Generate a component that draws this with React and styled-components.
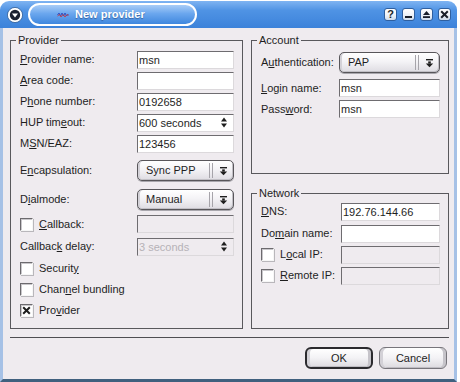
import React from 'react';
import styled, { createGlobalStyle } from 'styled-components';

const GlobalStyle = createGlobalStyle`
  html, body { margin: 0; padding: 0; background: #ffffff; }
  body {
    font-family: "Liberation Sans", Arial, Helvetica, sans-serif;
    font-size: 11px;
    line-height: 13px;
    color: #1e1e1e;
  }
  * { box-sizing: border-box; }
`;

const Window = styled.div`
  width: 457px;
  height: 382px;
  padding-top: 1px;
  display: flex;
  flex-direction: column;
`;

const TitleBar = styled.div`
  height: 27px;
  flex: none;
  display: flex;
  align-items: center;
  padding: 0 6px 0 7px;
  border-radius: 9px 9px 0 0;
  background: linear-gradient(180deg, #7fb4f2 0%, #4f93e4 35%, #3c82da 100%);
`;

const MenuButton = styled.div`
  width: 16px;
  height: 16px;
  flex: none;
  display: flex;
`;

const TitlePill = styled.div`
  margin-left: 5px;
  width: 169px;
  height: 23px;
  border: 2px solid #ffffff;
  border-radius: 12px;
  background: linear-gradient(180deg, #a8ccf7 0%, #6ba7ee 45%, #3f87de 100%);
  display: flex;
  align-items: center;
  padding-left: 27px;
  gap: 6px;
`;

const TitleText = styled.span`
  color: #ffffff;
  font-weight: bold;
  font-size: 11px;
  text-shadow: 0 1px 1px rgba(10, 30, 80, 0.45);
`;

const TitleButtons = styled.div`
  margin-left: auto;
  display: flex;
  gap: 5px;
`;

const TitleButton = styled.div`
  width: 13px;
  height: 13px;
  border-radius: 3px;
  border: 1px solid #2f5f9f;
  background: linear-gradient(180deg, #ffffff 0%, #eef2f8 55%, #cfdcec 100%);
  display: flex;
  align-items: center;
  justify-content: center;
  color: #1a1f2a;
  font-weight: bold;
  font-size: 11px;
  line-height: 11px;
`;

const Frame = styled.div`
  flex: 1;
  display: flex;
  flex-direction: column;
  background: #efebef;
  border-left: 3px solid #a6c1e6;
  border-right: 3px solid #a6c1e6;
  border-bottom: 3px solid #40607e;
  padding: 6px 5px 10px 7px;
`;

const Columns = styled.div`
  display: grid;
  grid-template-columns: 233px 198px;
  column-gap: 8px;
  height: 295px;
`;

const RightColumn = styled.div`
  display: flex;
  flex-direction: column;
  gap: 13px;
`;

const Group = styled.fieldset`
  margin: 0;
  padding: 0;
  min-width: 0;
  border: 1px solid #59585c;
  ${(p) => (p.$height ? `height: ${p.$height}px; flex: none;` : 'flex: 1;')}
`;

const Legend = styled.legend`
  margin-left: 5px;
  padding: 0 2px;
  line-height: 13px;
  font-size: 11px;
`;

const GroupBody = styled.div`
  --label: ${(p) => p.$label}px;
  display: flex;
  flex-direction: column;
  padding: ${(p) => p.$pt}px 8px 0 9px;
`;

const Row = styled.div`
  display: grid;
  grid-template-columns: var(--label) minmax(0, 1fr);
  align-items: center;
  height: ${(p) => p.$h}px;
`;

const Label = styled.span`
  white-space: nowrap;
`;

const Key = styled.u`
  text-underline-offset: 1px;
`;

const CheckRow = styled.div`
  display: flex;
  align-items: center;
  gap: 6px;
  height: ${(p) => p.$h}px;
  white-space: nowrap;
`;

const CheckBox = styled.span`
  width: 13px;
  height: 13px;
  flex: none;
  display: flex;
  align-items: center;
  justify-content: center;
  background: #ffffff;
  border-top: 1px solid #6c6a6e;
  border-left: 1px solid #6c6a6e;
  border-right: 1px solid #f6f6f6;
  border-bottom: 1px solid #f6f6f6;
  box-shadow: inset 1px 1px 0 #c9c7cb, 1px 1px 0 #b9b7bb;
`;

const Field = styled.input`
  width: 100%;
  height: 18px;
  margin: 0;
  padding: 0 2px 0 1px;
  font: inherit;
  color: #1e1e1e;
  outline: none;
  background: ${(p) => (p.$disabled ? '#efebef' : '#ffffff')};
  border-top: 1px solid #6e6c70;
  border-left: 1px solid #6e6c70;
  border-right: 1px solid #dcd9dc;
  border-bottom: 1px solid #dcd9dc;
`;

const SpinBox = styled.div`
  width: 100%;
  height: 18px;
  display: flex;
  align-items: center;
  padding-right: 6px;
  background: ${(p) => (p.$disabled ? '#efebef' : '#ffffff')};
  border-top: 1px solid #6e6c70;
  border-left: 1px solid #6e6c70;
  border-right: 1px solid #dcd9dc;
  border-bottom: 1px solid #dcd9dc;
`;

const SpinText = styled.input`
  flex: 1;
  min-width: 0;
  height: 100%;
  margin: 0;
  padding: 0 2px 0 1px;
  border: none;
  outline: none;
  background: transparent;
  font: inherit;
  color: ${(p) => (p.$disabled ? '#b6b2b7' : '#1e1e1e')};
`;

const Combo = styled.div`
  width: 100%;
  height: 21px;
  display: flex;
  align-items: center;
  border: 1px solid #58565a;
  border-radius: 5px;
  background: linear-gradient(180deg, #ffffff 0%, #f4f3f6 45%, #dedce2 100%);
  box-shadow: inset 2px 0 0 #d4d2d8, inset -1px -1px 0 #c2c0c6, 0 1px 0 #a9a7ad;
`;

const ComboText = styled.span`
  flex: 1;
  padding-left: 8px;
  white-space: nowrap;
`;

const ComboSep = styled.span`
  width: 4px;
  height: 15px;
  border-left: 1px solid #a6a4aa;
  border-right: 1px solid #a6a4aa;
  flex: none;
`;

const ComboArrow = styled.span`
  width: 20px;
  flex: none;
  display: flex;
  justify-content: center;
`;

const Separator = styled.div`
  height: 1px;
  background: #4f4e52;
  margin: 8px 0 9px;
`;

const ButtonRow = styled.div`
  display: flex;
  justify-content: flex-end;
  gap: 6px;
  padding-right: 2px;
`;

const PushButton = styled.button`
  width: 68px;
  height: 22px;
  margin: 0;
  padding: 0;
  font: inherit;
  color: #1e1e1e;
  border-radius: 6px;
  border: ${(p) => (p.$default ? '2px solid #2b2a2e' : '1px solid #77757b')};
  background: linear-gradient(180deg, #ffffff 0%, #f3f2f5 50%, #dcdadf 100%);
  box-shadow: inset 3px 0 0 #d3d1d7, inset -3px 0 0 #c6c4ca, inset 0 -1px 0 #bebcc2;
`;

const MenuIcon = () => (
  <svg width="16" height="16" viewBox="0 0 16 16">
    <circle cx="8" cy="8" r="7.6" fill="#ffffff" stroke="#2d5a96" strokeWidth="0.8" />
    <circle cx="8" cy="8" r="5.2" fill="#1a2030" />
    <path d="M5 6.6 L11 6.6 L8 10.4 Z" fill="#ffffff" />
  </svg>
);

const LogoIcon = () => (
  <svg width="12" height="7" viewBox="0 0 12 7">
    <path d="M0.5 4 L2 2 L3.5 5 L5 2 L6.5 5 L8 2 L9.5 5 L11.5 3" fill="none" stroke="#3050c0" strokeWidth="1" />
    <path d="M0.5 5 L2.5 3.5 L4 6 L6 3.5 L8 6 L10 3.5 L11.5 4.5" fill="none" stroke="#d03030" strokeWidth="0.8" />
  </svg>
);

const MinIcon = () => (
  <svg width="9" height="9" viewBox="0 0 9 9">
    <rect x="1" y="6" width="7" height="2" fill="#1a1f2a" />
  </svg>
);

const MaxIcon = () => (
  <svg width="9" height="9" viewBox="0 0 9 9">
    <path d="M1 5 L8 5 L4.5 1 Z" fill="#1a1f2a" />
    <rect x="1" y="6.2" width="7" height="1.8" fill="#1a1f2a" />
  </svg>
);

const CloseIcon = () => (
  <svg width="9" height="9" viewBox="0 0 9 9">
    <path d="M1.2 1.2 L7.8 7.8 M7.8 1.2 L1.2 7.8" stroke="#1a1f2a" strokeWidth="2" />
  </svg>
);

const DropArrow = () => (
  <svg width="9" height="10" viewBox="0 0 9 10">
    <rect x="1" y="1" width="7" height="1.4" fill="#1e1e1e" />
    <rect x="3.2" y="3.4" width="2.6" height="2.2" fill="#1e1e1e" />
    <path d="M0.8 5.4 L8.2 5.4 L4.5 9.2 Z" fill="#1e1e1e" />
  </svg>
);

const SpinArrows = () => (
  <svg width="6" height="11" viewBox="0 0 6 11">
    <path d="M0 4.5 L6 4.5 L3 0.5 Z" fill="#1e1e1e" />
    <path d="M0 6.5 L6 6.5 L3 10.5 Z" fill="#1e1e1e" />
  </svg>
);

const CheckMark = () => (
  <svg width="9" height="9" viewBox="0 0 9 9">
    <path d="M1.2 1.2 L7.8 7.8 M7.8 1.2 L1.2 7.8" stroke="#1e1e1e" strokeWidth="2" />
  </svg>
);

const Check = ({ checked }) => <CheckBox>{checked ? <CheckMark /> : null}</CheckBox>;

const Text = ({ value, disabled }) => <Field readOnly defaultValue={value} $disabled={disabled} />;

const Spin = ({ value, disabled }) => (
  <SpinBox $disabled={disabled}>
    <SpinText readOnly defaultValue={value} $disabled={disabled} />
    <SpinArrows />
  </SpinBox>
);

const Select = ({ value }) => (
  <Combo>
    <ComboText>{value}</ComboText>
    <ComboSep />
    <ComboArrow>
      <DropArrow />
    </ComboArrow>
  </Combo>
);

export default function App() {
  return (
    <>
      <GlobalStyle />
      <Window>
        <TitleBar>
          <MenuButton>
            <MenuIcon />
          </MenuButton>
          <TitlePill>
            <LogoIcon />
            <TitleText>New provider</TitleText>
          </TitlePill>
          <TitleButtons>
            <TitleButton>?</TitleButton>
            <TitleButton>
              <MinIcon />
            </TitleButton>
            <TitleButton>
              <MaxIcon />
            </TitleButton>
            <TitleButton>
              <CloseIcon />
            </TitleButton>
          </TitleButtons>
        </TitleBar>
        <Frame>
          <Columns>
            <Group>
              <Legend>Provider</Legend>
              <GroupBody $pt={2} $label={117}>
                <Row $h={21}>
                  <Label><Key>P</Key>rovider name:</Label>
                  <Text value="msn" />
                </Row>
                <Row $h={21}>
                  <Label><Key>A</Key>rea code:</Label>
                  <Text value="" />
                </Row>
                <Row $h={21}>
                  <Label>P<Key>h</Key>one number:</Label>
                  <Text value="0192658" />
                </Row>
                <Row $h={21}>
                  <Label>HUP tim<Key>e</Key>out:</Label>
                  <Spin value="600 seconds" />
                </Row>
                <Row $h={21}>
                  <Label>M<Key>S</Key>N/EAZ:</Label>
                  <Text value="123456" />
                </Row>
                <Row $h={33}>
                  <Label>E<Key>n</Key>capsulation:</Label>
                  <Select value="Sync PPP" />
                </Row>
                <Row $h={25}>
                  <Label>D<Key>i</Key>almode:</Label>
                  <Select value="Manual" />
                </Row>
                <Row $h={24}>
                  <CheckRow $h={24}>
                    <Check />
                    <span><Key>C</Key>allback:</span>
                  </CheckRow>
                  <Text value="" disabled />
                </Row>
                <Row $h={21}>
                  <Label>Callbac<Key>k</Key> delay:</Label>
                  <Spin value="3 seconds" disabled />
                </Row>
                <CheckRow $h={23}>
                  <Check />
                  <span>Securit<Key>y</Key></span>
                </CheckRow>
                <CheckRow $h={18}>
                  <Check />
                  <span>Chan<Key>n</Key>el bundling</span>
                </CheckRow>
                <CheckRow $h={25}>
                  <Check checked />
                  <span>Pro<Key>v</Key>ider</span>
                </CheckRow>
              </GroupBody>
            </Group>
            <RightColumn>
              <Group $height={140}>
                <Legend>Account</Legend>
                <GroupBody $pt={0} $label={78}>
                  <Row $h={31}>
                    <Label>A<Key>u</Key>thentication:</Label>
                    <Select value="PAP" />
                  </Row>
                  <Row $h={20}>
                    <Label><Key>L</Key>ogin name:</Label>
                    <Text value="msn" />
                  </Row>
                  <Row $h={22}>
                    <Label>Pass<Key>w</Key>ord:</Label>
                    <Text value="msn" />
                  </Row>
                </GroupBody>
              </Group>
              <Group>
                <Legend>Network</Legend>
                <GroupBody $pt={0} $label={80}>
                  <Row $h={23}>
                    <Label><Key>D</Key>NS:</Label>
                    <Text value="192.76.144.66" />
                  </Row>
                  <Row $h={21}>
                    <Label>Do<Key>m</Key>ain name:</Label>
                    <Text value="" />
                  </Row>
                  <Row $h={21}>
                    <CheckRow $h={21}>
                      <Check />
                      <span>L<Key>o</Key>cal IP:</span>
                    </CheckRow>
                    <Text value="" disabled />
                  </Row>
                  <Row $h={21}>
                    <CheckRow $h={21}>
                      <Check />
                      <span><Key>R</Key>emote IP:</span>
                    </CheckRow>
                    <Text value="" disabled />
                  </Row>
                </GroupBody>
              </Group>
            </RightColumn>
          </Columns>
          <Separator />
          <ButtonRow>
            <PushButton $default>OK</PushButton>
            <PushButton>Cancel</PushButton>
          </ButtonRow>
        </Frame>
      </Window>
    </>
  );
}
